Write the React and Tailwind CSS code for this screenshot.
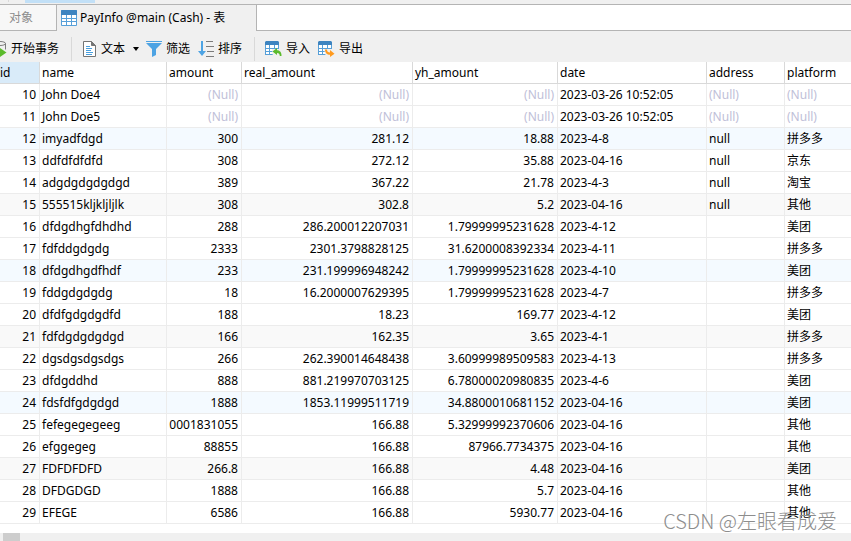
const N = null;
const rows = [
  [10, 'John Doe4', N, N, N, '2023-03-26 10:52:05', N, N],
  [11, 'John Doe5', N, N, N, '2023-03-26 10:52:05', N, N],
  [12, 'imyadfdgd', '300', '281.12', '18.88', '2023-4-8', 'null', '拼多多'],
  [13, 'ddfdfdfdfd', '308', '272.12', '35.88', '2023-04-16', 'null', '京东'],
  [14, 'adgdgdgdgdgd', '389', '367.22', '21.78', '2023-4-3', 'null', '淘宝'],
  [15, '555515kljkljljlk', '308', '302.8', '5.2', '2023-04-16', 'null', '其他'],
  [16, 'dfdgdhgfdhdhd', '288', '286.200012207031', '1.79999995231628', '2023-4-12', '', '美团'],
  [17, 'fdfddgdgdg', '2333', '2301.3798828125', '31.6200008392334', '2023-4-11', '', '拼多多'],
  [18, 'dfdgdhgdfhdf', '233', '231.199996948242', '1.79999995231628', '2023-4-10', '', '美团'],
  [19, 'fddgdgdgdg', '18', '16.2000007629395', '1.79999995231628', '2023-4-7', '', '拼多多'],
  [20, 'dfdfgdgdgdfd', '188', '18.23', '169.77', '2023-4-12', '', '美团'],
  [21, 'fdfdgdgdgdgd', '166', '162.35', '3.65', '2023-4-1', '', '拼多多'],
  [22, 'dgsdgsdgsdgs', '266', '262.390014648438', '3.60999989509583', '2023-4-13', '', '拼多多'],
  [23, 'dfdgddhd', '888', '881.219970703125', '6.78000020980835', '2023-4-6', '', '美团'],
  [24, 'fdsfdfgdgdgd', '1888', '1853.11999511719', '34.8800010681152', '2023-04-16', '', '美团'],
  [25, 'fefegegegeeg', '0001831055', '166.88', '5.32999992370606', '2023-04-16', '', '其他'],
  [26, 'efggegeg', '88855', '166.88', '87966.7734375', '2023-04-16', '', '其他'],
  [27, 'FDFDFDFD', '266.8', '166.88', '4.48', '2023-04-16', '', '美团'],
  [28, 'DFDGDGD', '1888', '166.88', '5.7', '2023-04-16', '', '其他'],
  [29, 'EFEGE', '6586', '166.88', '5930.77', '2023-04-16', '', '其他'],
];
const headers = ['id', 'name', 'amount', 'real_amount', 'yh_amount', 'date', 'address', 'platform'];
const numeric = [true, false, true, true, true, false, false, false];

function rowColor(id) {
  if (id % 6 === 0) return 'bg-[#f4faff]';
  if (id % 3 === 0) return 'bg-[#f9f9f9]';
  return 'bg-white';
}

function TableIcon() {
  return (
    <svg width="16" height="16" viewBox="0 0 16 16" className="shrink-0">
      <rect width="16" height="16" rx="1" fill="#569fd8" />
      <path d="M1 0h14a1 1 0 0 1 1 1v4H0V1a1 1 0 0 1 1-1z" fill="#3d84c0" />
      <path d="M1 5h4v3H1zM6 5h4v3H6zM11 5h4v3h-4zM1 9h4v2H1zM6 9h4v2H6zM11 9h4v2h-4zM1 12h4v3H1zM6 12h4v3H6zM11 12h4v3h-4z" fill="#fff" />
    </svg>
  );
}

function TransactionIcon() {
  return (
    <svg width="7" height="18" viewBox="0 0 7 18" className="shrink-0">
      <path d="M0 1.500c3 0 5.500.8 5.500 2S3 5.500 0 5.500M5.500 3.500v6" fill="none" stroke="#7b7b7b" />
      <path d="M0 8l6.500 4.500L0 17z" fill="#5bbb2c" />
    </svg>
  );
}

function TextIcon() {
  return (
    <svg width="14" height="16" viewBox="0 0 14 16" className="shrink-0">
      <path d="M.5.500h8l4 4v11H.5z" fill="#fff" stroke="#747474" />
      <path d="M8.500.500v4h4z" fill="#747474" stroke="#747474" />
      <path d="M3 5.500h4M3 7.500h6M3 9.500h5M3 11.500h7M3 13.500h6" stroke="#4a9fdd" />
    </svg>
  );
}

function FilterIcon() {
  return (
    <svg width="16" height="16" viewBox="0 0 16 16" className="shrink-0">
      <path d="M0 0h16v1H0zM0 2h16l-6 6v6l-4 2V8z" fill="#4da3e3" />
    </svg>
  );
}

function SortIcon() {
  return (
    <svg width="16" height="16" viewBox="0 0 16 16" className="shrink-0">
      <path d="M3 0h2v10h3l-4 5-4-5h3z" fill="#4da3e3" />
      <path d="M8 .5h7M8 5.500h8M9 10.500h7M8 15.500h8" stroke="#7b7b7b" />
    </svg>
  );
}

function TransferIcon({ out }) {
  return (
    <svg width="17" height="16" viewBox="0 0 17 16" className="shrink-0">
      <path d="M0 1h14v13H0z" fill="#569fd8" />
      <path d="M1 0h12l1 1v3H0V1z" fill="#3d84c0" />
      <path d="M1 4h3v3H1zM5 4h4v3H5zM10 4h3v3h-3zM1 8h3v2H1zM5 8h4v2H5zM10 8h3v2h-3zM1 11h3v2H1zM5 11h4v2H5zM10 11h4v3h-4z" fill="#fff" />
      {out ? (
        <>
          <path d="M6 8h11v8H8z" fill="#f0f0f0" />
          <path d="M7 8.500h2c0 2 1 3 3 3V9l4.500 3.800L12 16v-2.200c-3 0-5-2-5-5.300z" fill="#ff9a1e" />
        </>
      ) : (
        <>
          <path d="M7 8h10v8H8z" fill="#f0f0f0" />
          <path d="M7.500 10.500L12 7v2.200c3 0 4.800 2.300 4.500 5.800h-1.700c0-2-1-3-2.800-3V14z" fill="#5bbb2c" />
        </>
      )}
    </svg>
  );
}

function ToolButton({ icon, children }) {
  return (
    <button type="button" className="flex h-6 items-center gap-1 whitespace-nowrap">
      {icon}
      <span>{children}</span>
    </button>
  );
}

export default function App() {
  return (
    <main className="relative flex min-h-screen w-full flex-col overflow-hidden bg-white font-['Noto_Sans','Noto_Sans_CJK_SC',sans-serif] text-xs text-black">
      <div className="flex h-1 items-start gap-4 bg-[#f0f0f0] pl-2">
        <div className="h-0.5 w-px bg-[#d9d9d9]" />
        <div className="h-[3px] w-[70px] bg-[#c2e0f7]" />
      </div>
      <div role="tablist" className="flex h-[27px] border-t border-[#b4b4b4] bg-white">
        <button type="button" role="tab" aria-selected="false" className="w-[57px] border-r border-b border-[#b4b4b4] bg-[#f7f7f7] pl-[9px] text-left text-[#8c8c8c]">
          对象
        </button>
        <button type="button" role="tab" aria-selected="true" className="flex w-[200px] items-center gap-[3px] border-r border-[#b4b4b4] bg-[#f0f0f0] pl-1 whitespace-nowrap">
          <TableIcon />
          PayInfo @main (Cash) - 表
        </button>
        <div className="flex-1 border-b border-[#b4b4b4]" />
      </div>
      <div role="toolbar" className="flex h-[31px] items-center bg-[#f0f0f0] pt-1">
        <ToolButton icon={<TransactionIcon />}>开始事务</ToolButton>
        <div className="mr-[11px] ml-3 h-6 w-px bg-[#d9d9d9]" />
        <ToolButton icon={<TextIcon />}>
          <span className="flex items-center gap-2">
            文本
            <svg width="6" height="4" viewBox="0 0 6 4"><path d="M0 0h6L3 4z" /></svg>
          </span>
        </ToolButton>
        <div className="ml-[7px] flex gap-2">
          <ToolButton icon={<FilterIcon />}>筛选</ToolButton>
          <ToolButton icon={<SortIcon />}>排序</ToolButton>
        </div>
        <div className="mr-2.5 ml-3 h-6 w-px bg-[#d9d9d9]" />
        <div className="flex gap-2">
          <ToolButton icon={<TransferIcon />}>导入</ToolButton>
          <ToolButton icon={<TransferIcon out />}>导出</ToolButton>
        </div>
      </div>
      <table className="w-full table-fixed border-separate border-spacing-0">
        <colgroup>
          <col className="w-10" />
          <col className="w-[127px]" />
          <col className="w-[75px]" />
          <col className="w-[171px]" />
          <col className="w-[145px]" />
          <col className="w-[149px]" />
          <col className="w-[78px]" />
          <col />
        </colgroup>
        <thead>
          <tr>
            {headers.map((h, i) => (
              <th key={h} scope="col" className={`h-[22px] border-b border-[#d9d9d9] p-0 text-left font-normal ${i === 0 ? 'border-r bg-[#d9ebf9]' : i === 7 ? 'pl-0.5' : 'border-r pl-0.5'}`}>
                {h}
              </th>
            ))}
          </tr>
        </thead>
        <tbody>
          {rows.map((r) => (
            <tr key={r[0]} className={rowColor(r[0])}>
              {r.map((v, i) => (
                <td key={headers[i]} className={`h-[22px] overflow-hidden border-b border-[#ececec] p-0 leading-4 whitespace-nowrap ${i === 7 ? '' : 'border-r'} ${numeric[i] ? 'pr-[3px] text-right' : 'pl-0.5'} ${v === N ? 'text-[#c0c0d8]' : ''}`}>
                  {v === N ? '(Null)' : v}
                </td>
              ))}
            </tr>
          ))}
        </tbody>
      </table>
      <div className="mt-auto h-2 bg-[#f0f0f0] pl-[3px]">
        <div className="h-2 w-[17px] bg-[#cdcdcd]" />
      </div>
      <p className="absolute right-3.5 bottom-2 font-['Noto_Sans_CJK_SC',sans-serif] text-xl leading-6 font-light text-[#8d8d8d]">CSDN @左眼看成爱</p>
    </main>
  );
}
